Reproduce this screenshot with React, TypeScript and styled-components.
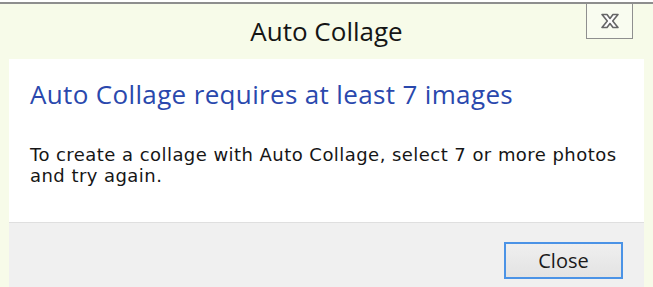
import React from "react";
import styled, { createGlobalStyle } from "styled-components";

const Global = createGlobalStyle`
  html, body { margin: 0; padding: 0; background: #ffffff; }
  body { font-family: "Open Sans", "Noto Sans", sans-serif; }
`;

const Frame = styled.div`
  width: 653px;
  height: 285px;
  box-sizing: border-box;
  margin-top: 2px;
  border-top: 2px solid #8e8e8e;
  background: #f7fbe9;
  display: flex;
  flex-direction: column;
  overflow: hidden;
`;

const TitleBar = styled.div`
  height: 55px;
  flex: none;
  display: grid;
  grid-template-columns: 1fr auto 1fr;
  align-items: start;
`;

const Title = styled.div`
  grid-column: 2;
  padding-top: 12px;
  font-size: 26px;
  line-height: 31px;
  color: #151515;
`;

const CloseBox = styled.button`
  grid-column: 3;
  justify-self: end;
  margin-right: 20px;
  width: 47px;
  height: 35px;
  padding: 0;
  border: 1px solid #8f8f8f;
  border-top: none;
  background: #f9fcf0;
  display: flex;
  align-items: center;
  justify-content: center;
`;

const Panel = styled.div`
  flex: none;
  margin: 0 9px;
  background: #ffffff;
  padding: 20px 21px 0 21px;
  height: 164px;
  box-sizing: border-box;
  border-bottom: 1px solid #dfdfdf;
`;

const Heading = styled.div`
  font-size: 26px;
  line-height: 30px;
  letter-spacing: 0.35px;
  color: #2a48ad;
  white-space: nowrap;
`;

const Body = styled.div`
  margin-top: 35px;
  font-family: "DejaVu Sans", "Open Sans", sans-serif;
  font-size: 18px;
  line-height: 21px;
  letter-spacing: 0.45px;
  color: #161616;
  white-space: nowrap;
`;

const Footer = styled.div`
  margin: 0 9px;
  flex: 1;
  background: #f0f0f0;
  display: flex;
  justify-content: flex-end;
  align-items: flex-start;
  padding: 19px 21px 0 0;
`;

const Button = styled.button`
  width: 119px;
  height: 37px;
  box-sizing: border-box;
  border: 2px solid #4b93e6;
  background: linear-gradient(#efefef, #e3e3e3);
  font-family: "Open Sans", "Noto Sans", sans-serif;
  font-size: 20px;
  color: #1a1a1a;
  padding: 0;
`;

const XIcon = () => (
  <svg width="20" height="16" viewBox="0 0 20 16">
    <path
      d="M2 1.5 H7 L10 5.5 L13 1.5 H18 L12.7 8 L18 14.5 H13 L10 10.5 L7 14.5 H2 L7.3 8 Z"
      fill="#ffffff"
      stroke="#666666"
      strokeWidth="1.6"
      strokeLinejoin="round"
    />
  </svg>
);

export default function App() {
  return (
    <>
      <Global />
      <Frame>
        <TitleBar>
          <Title>Auto Collage</Title>
          <CloseBox aria-label="Close">
            <XIcon />
          </CloseBox>
        </TitleBar>
        <Panel>
          <Heading>Auto Collage requires at least 7 images</Heading>
          <Body>
            To create a collage with Auto Collage, select 7 or more photos
            <br />
            and try again.
          </Body>
        </Panel>
        <Footer>
          <Button>Close</Button>
        </Footer>
      </Frame>
    </>
  );
}
